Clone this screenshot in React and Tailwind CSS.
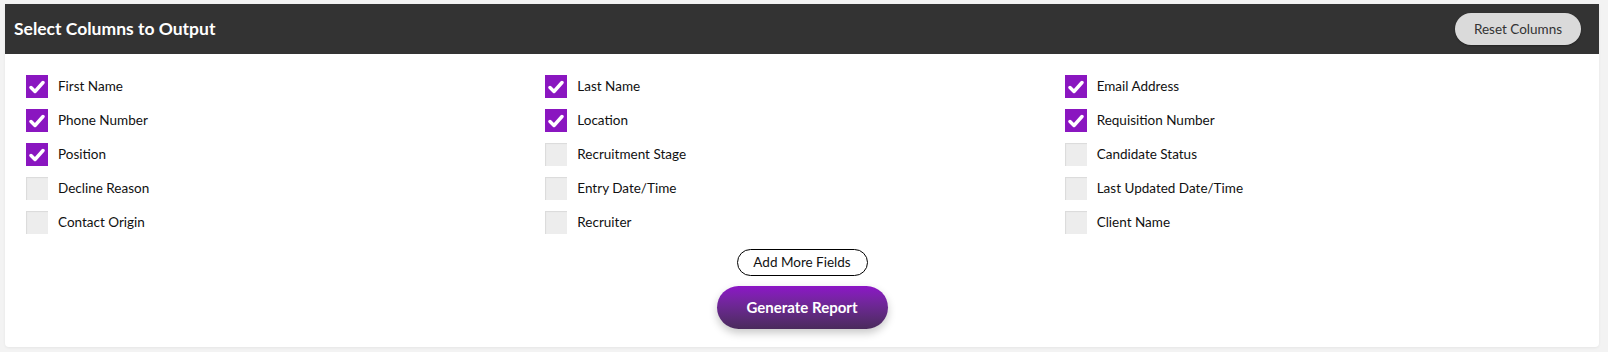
import React, { useState } from 'react';

const FIELDS = [
  ['First Name', true], ['Last Name', true], ['Email Address', true],
  ['Phone Number', true], ['Location', true], ['Requisition Number', true],
  ['Position', true], ['Recruitment Stage', false], ['Candidate Status', false],
  ['Decline Reason', false], ['Entry Date/Time', false], ['Last Updated Date/Time', false],
  ['Contact Origin', false], ['Recruiter', false], ['Client Name', false],
];

function Checkbox({ checked, label, onToggle }) {
  return (
    <label className="flex items-center gap-[10px] h-[23px] cursor-pointer select-none">
      {checked ? (
        <span className="w-[22px] h-[23px] bg-[#8a16c0] flex items-center justify-center">
          <svg width="16" height="14" viewBox="0 0 16 14">
            <path d="M2 7.5 L6 11.5 L14 2.5" fill="none" stroke="white" strokeWidth="3.4" strokeLinecap="round" strokeLinejoin="round" />
          </svg>
        </span>
      ) : (
        <span className="w-[22px] h-[23px] bg-[#ededed] shadow-[inset_1px_1px_1px_rgba(0,0,0,0.08)]" />
      )}
      <input type="checkbox" className="hidden" checked={checked} onChange={onToggle} />
      <span className="text-[13.5px] text-[#111]">{label}</span>
    </label>
  );
}

export default function App() {
  const [fields, setFields] = useState(FIELDS.map(([label, on]) => ({ label, on })));

  const toggle = (i) => setFields(fields.map((f, j) => (j === i ? { ...f, on: !f.on } : f)));
  const reset = () => setFields(FIELDS.map(([label, on]) => ({ label, on })));

  return (
    <div className="min-h-screen bg-[#f3f3f3] pt-[4px] pl-[5px] pr-[9px] pb-[7px]" style={{ fontFamily: 'Lato, "Open Sans", sans-serif' }}>
      <div className="bg-white rounded-b-[4px] shadow-[0_1px_3px_rgba(0,0,0,0.06)]">
        {/* Header */}
        <div className="h-[50px] bg-[#333333] flex items-center justify-between pl-[9px] pr-[18px]">
          <h2 className="text-white text-[17.5px] font-bold">Select Columns to Output</h2>
          <button
            onClick={reset}
            className="w-[126px] h-[32px] rounded-full bg-[#dadada] text-[#333] text-[13.5px] shadow-[0_1px_2px_rgba(0,0,0,0.3)]"
          >
            Reset Columns
          </button>
        </div>

        {/* Columns */}
        <div className="pt-[21px] pl-[21px] pr-[15px] grid grid-cols-3 gap-y-[11px]">
          {fields.map((f, i) => (
            <Checkbox key={f.label} checked={f.on} label={f.label} onToggle={() => toggle(i)} />
          ))}
        </div>

        {/* Actions */}
        <div className="flex flex-col items-center pt-[15px] pb-[18px]">
          <button className="w-[131px] h-[27px] rounded-full border border-black text-[13.5px] text-[#111] bg-white">
            Add More Fields
          </button>
          <button className="mt-[10px] w-[171px] h-[43px] rounded-full bg-gradient-to-b from-[#8c14c6] to-[#4a2a5c] text-white text-[15px] font-bold shadow-[0_4px_8px_rgba(0,0,0,0.22)]">
            Generate Report
          </button>
        </div>
      </div>
    </div>
  );
}
